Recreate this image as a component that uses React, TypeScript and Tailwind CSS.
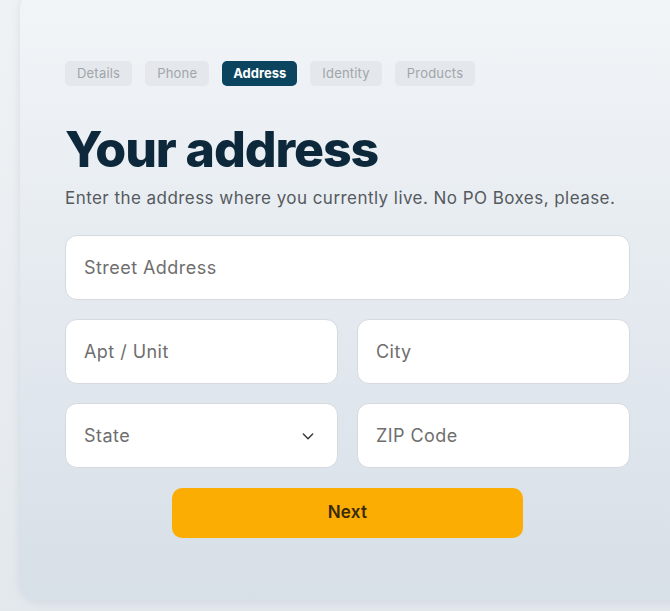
import React from "react";

const tabs = ["Details", "Phone", "Address", "Identity", "Products"];

function Field({ label, select }: { label: string; select?: boolean }) {
  return (
    <div className="h-[65px] rounded-[12px] bg-white border border-[#d6dadf] flex items-center justify-between pl-[18px] pr-[21px]">
      <span className="text-[18px] tracking-[0.45px] text-[#6e6e6e]">{label}</span>
      {select && (
        <svg width="16" height="16" viewBox="0 0 24 24" fill="none" stroke="#3a3a3a" strokeWidth="2.2" strokeLinecap="round" strokeLinejoin="round">
          <path d="M5 9l7 7 7-7" />
        </svg>
      )}
    </div>
  );
}

export default function App() {
  return (
    <div
      className="w-[670px] h-[611px] overflow-hidden bg-gradient-to-b from-[#eff2f5] to-[#e3e8ed]"
      style={{ fontFamily: "Inter, 'Open Sans', sans-serif" }}
    >
      <div className="ml-[20px] -mt-[10px] w-[700px] h-[610px] rounded-[20px] bg-gradient-to-b from-[#f2f5f8] to-[#d7dfe7] shadow-[0_2px_10px_rgba(120,140,160,0.18)] pt-[71px] pl-[45px]">
        <div className="w-[565px]">
          <div className="flex gap-[13px]">
            {tabs.map((t) =>
              t === "Address" ? (
                <div key={t} className="h-[25px] px-[11px] rounded-[5px] bg-[#0b445e] text-white text-[13px] font-bold flex items-center">
                  {t}
                </div>
              ) : (
                <div key={t} className="h-[25px] px-[12px] rounded-[5px] bg-[#e4e8ec] text-[#a0a5aa] text-[13px] tracking-[0.2px] flex items-center">
                  {t}
                </div>
              )
            )}
          </div>
          <h1 className="mt-[38px] text-[50px] leading-[50px] font-extrabold text-[#0c283a] tracking-[-1.1px]">Your address</h1>
          <p className="mt-[12px] text-[17px] leading-[24px] tracking-[0.45px] text-[#555a5e]">
            Enter the address where you currently live. No PO Boxes, please.
          </p>
          <div className="mt-[25px] flex flex-col gap-[19px]">
            <Field label="Street Address" />
            <div className="grid grid-cols-2 gap-[19px]">
              <Field label="Apt / Unit" />
              <Field label="City" />
            </div>
            <div className="grid grid-cols-2 gap-[19px]">
              <Field label="State" select />
              <Field label="ZIP Code" />
            </div>
          </div>
          <div className="mt-[20px] flex justify-center">
            <button className="w-[351px] h-[50px] rounded-[10px] bg-[#fbad03] text-[#3a2a05] text-[17px] tracking-[0.3px] font-semibold">
              Next
            </button>
          </div>
        </div>
      </div>
    </div>
  );
}
